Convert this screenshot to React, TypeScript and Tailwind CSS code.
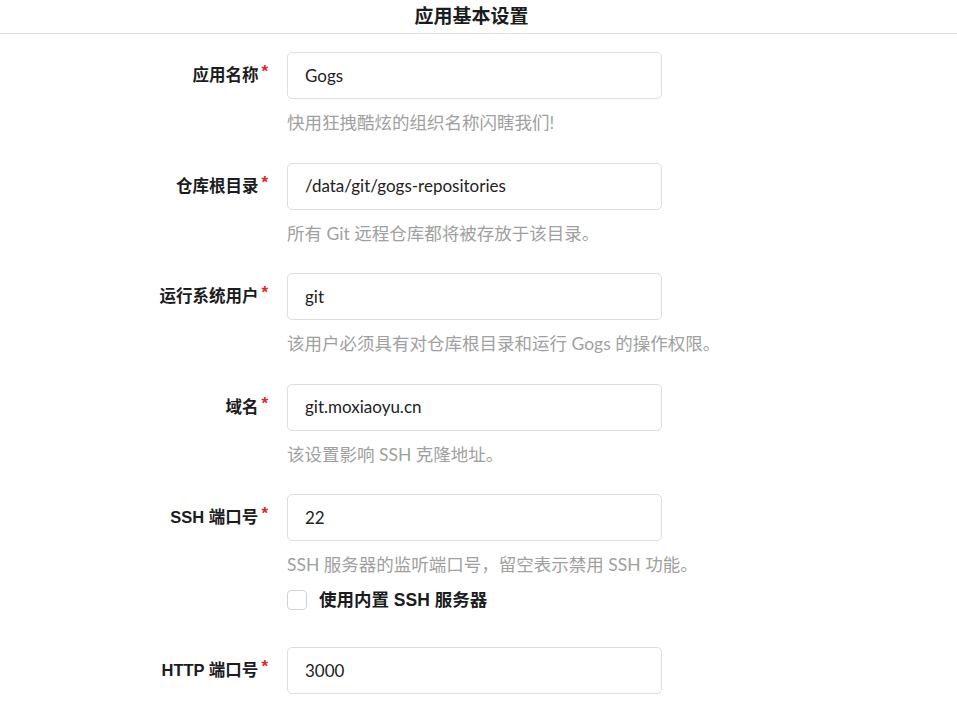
const font = { fontFamily: 'Lato, "Noto Sans CJK SC", sans-serif' };
const labelFont = { fontFamily: '"Liberation Sans", "Noto Sans CJK SC", sans-serif' };

interface Field { label: string; value: string; help: string }

const fields: Field[] = [
    { label: '应用名称', value: 'Gogs', help: '快用狂拽酷炫的组织名称闪瞎我们!' },
    { label: '仓库根目录', value: '/data/git/gogs-repositories', help: '所有 Git 远程仓库都将被存放于该目录。' },
    { label: '运行系统用户', value: 'git', help: '该用户必须具有对仓库根目录和运行 Gogs 的操作权限。' },
    { label: '域名', value: 'git.moxiaoyu.cn', help: '该设置影响 SSH 克隆地址。' },
];

function Label({ text }: { text: string }) {
    return (
        <div className="w-[270px] shrink-0 flex justify-end items-start pt-[12px] pr-[2px]" style={labelFont}>
            <span className="text-[16.5px] font-bold text-[#1b1c1d] leading-[22px]">{text}</span>
            <span className="text-[#db2828] text-[17px] font-bold leading-none ml-[3px] -mt-[1px]">*</span>
        </div>
    );
}

function Input({ value }: { value: string }) {
    return (
        <div className="w-[375px] h-[47px] border border-[#dedede] rounded-[5px] bg-white flex items-center pl-[17px] text-[17px] text-[#222]">
            {value}
        </div>
    );
}

export default function App() {
    return (
        <div className="w-[957px] h-[701px] bg-white overflow-hidden" style={font}>
            {/* Header */}
            <div className="h-[34px] border-b border-[#dedede] flex items-center justify-center pr-[14px]">
                <h3 className="text-[19px] font-bold text-[#1b1c1d]">应用基本设置</h3>
            </div>

            <div className="pt-[18px] flex flex-col">
                {fields.map((f) => (
                    <div key={f.label} className="flex h-[110.5px]">
                        <Label text={f.label} />
                        <div className="ml-[17px] flex flex-col">
                            <Input value={f.value} />
                            <p className="mt-[12px] text-[17.5px] text-[#a0a0a0] leading-[24px]">{f.help}</p>
                        </div>
                    </div>
                ))}

                {/* SSH port */}
                <div className="flex h-[153px]">
                    <Label text="SSH 端口号" />
                    <div className="ml-[17px] flex flex-col">
                        <Input value="22" />
                        <p className="mt-[12px] text-[17.5px] text-[#a0a0a0] leading-[24px]">SSH 服务器的监听端口号，留空表示禁用 SSH 功能。</p>
                        <label className="mt-[10px] flex items-center gap-[12px]">
                            <span className="w-[20px] h-[20px] border border-[#d4d4d5] rounded-[4px] bg-white" />
                            <span className="text-[17.5px] font-bold text-[#1b1c1d]" style={labelFont}>使用内置 SSH 服务器</span>
                        </label>
                    </div>
                </div>

                {/* HTTP port */}
                <div className="flex">
                    <Label text="HTTP 端口号" />
                    <div className="ml-[17px] flex flex-col">
                        <Input value="3000" />
                    </div>
                </div>
            </div>
        </div>
    );
}
